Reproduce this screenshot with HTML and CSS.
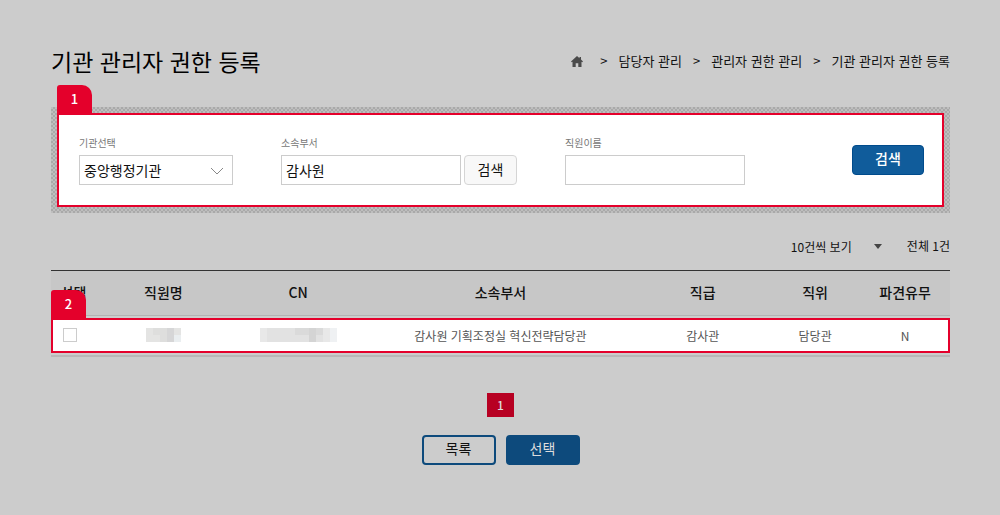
FILE: index.html
```
<!DOCTYPE html>
<html lang="ko">

<head>
    <meta charset="UTF-8">
    <meta name="viewport" content="width=device-width, initial-scale=1.0">
    <title>기관 관리자 권한 등록</title>
    <link rel="stylesheet" href="styles.css">
</head>

<body>
    <main class="page">
        <header class="page-header">
            <h1>기관 관리자 권한 등록</h1>
            <nav class="breadcrumb">
                <a href="#" class="home" aria-label="홈">
                    <svg width="12" height="11" viewBox="0 0 12 11">
                        <path d="M6 0 L8.500 2.200 V1 H10 V3.500 L12 5.500 L11.300 6.300 L10.500 5.700 V11 H7.300 V7.300 H4.700 V11 H1.500 V5.700 L0.700 6.300 L0 5.500 Z" fill="#4a4a4a" />
                    </svg>
                </a>
                <span>&gt;</span>
                <a href="#">담당자 관리</a>
                <span>&gt;</span>
                <a href="#">관리자 권한 관리</a>
                <span>&gt;</span>
                <a href="#">기관 관리자 권한 등록</a>
            </nav>
        </header>

        <div class="search-panel">
            <form class="search-box">
                <span class="badge">1</span>
                <div class="field">
                    <label for="org">기관선택</label>
                    <div class="select-wrap">
                        <select id="org">
                            <option>중앙행정기관</option>
                        </select>
                        <svg class="chevron" width="14" height="8" viewBox="0 0 14 8">
                            <path d="M1 1 L7 7 L13 1" fill="none" stroke="#888" />
                        </svg>
                    </div>
                </div>
                <div class="field">
                    <label for="dept">소속부서</label>
                    <div class="field-row">
                        <input type="text" id="dept" value="감사원">
                        <button type="button" class="btn-small">검색</button>
                    </div>
                </div>
                <div class="field">
                    <label for="name">직원이름</label>
                    <input type="text" id="name">
                </div>
                <button type="button" class="btn-search">검색</button>
            </form>
        </div>

        <div class="list-info">
            <div class="count-wrap">
                <select class="count-select" aria-label="보기 개수">
                    <option>10건씩 보기</option>
                </select>
                <svg class="caret" width="8" height="5" viewBox="0 0 8 5">
                    <path d="M0 0 H8 L4 5 Z" fill="#444" />
                </svg>
            </div>
            <span>전체 1건</span>
        </div>

        <table class="list">
            <colgroup>
                <col class="w5">
                <col class="w15">
                <col class="w15">
                <col class="w30">
                <col class="w15">
                <col class="w10">
                <col class="w10">
            </colgroup>
            <thead>
                <tr>
                    <th>선택</th>
                    <th>직원명</th>
                    <th>CN</th>
                    <th>소속부서</th>
                    <th>직급</th>
                    <th>직위</th>
                    <th>파견유무</th>
                </tr>
            </thead>
            <tbody>
                <tr>
                    <td class="check">
                        <div class="row-frame"><span class="badge">2</span></div>
                        <input type="checkbox" aria-label="선택">
                    </td>
                    <td>
                        <svg class="mosaic" width="35" height="14" viewBox="0 0 5 2" shape-rendering="crispEdges">
                            <path d="M0 0h5v2H0z" fill="#e4e4e3" />
                            <path d="M1 0h2v1H1z M2 1h1v1H2z" fill="#dededd" />
                            <path d="M3 0h1v2H3z" fill="#d6d6d7" />
                            <path d="M4 1h1v1H4z" fill="#eaeef0" />
                        </svg>
                    </td>
                    <td>
                        <svg class="mosaic" width="77" height="14" viewBox="0 0 11 2" shape-rendering="crispEdges">
                            <path d="M0 0h11v2H0z" fill="#e2e2e2" />
                            <path d="M0 0h1v2H0z M9 0h1v2H9z" fill="#e8e8e8" />
                            <path d="M10 0h1v2h-1z" fill="#eff1f3" />
                            <path d="M5 0h2v1H5z M8 0h1v1H8z" fill="#dadada" />
                            <path d="M7 0h1v2H7z" fill="#d4d4d4" />
                        </svg>
                    </td>
                    <td>감사원 기획조정실 혁신전략담당관</td>
                    <td>감사관</td>
                    <td>담당관</td>
                    <td>N</td>
                </tr>
            </tbody>
        </table>

        <div class="paging">
            <a href="#" class="current">1</a>
        </div>

        <div class="buttons">
            <button type="button" class="btn-line">목록</button>
            <button type="button" class="btn-fill">선택</button>
        </div>
    </main>
</body>

</html>
```
FILE: styles.css
```
* {
    margin: 0;
    padding: 0;
    box-sizing: border-box;
}

body {
    background: #ccc;
    color: #111;
    font-family: "Noto Sans CJK KR", sans-serif;
    font-size: 12px;
}

a {
    color: inherit;
    text-decoration: none;
}

input,
select,
button {
    font-family: inherit;
    font-size: 14px;
    color: #111;
}

select {
    appearance: none;
}

.page {
    padding: 43px 50px 50px 51px;
}

.page-header {
    display: flex;
    justify-content: space-between;
    align-items: center;
    height: 36px;
}

h1 {
    font-size: 23px;
    font-weight: 400;
    line-height: 36px;
    color: #000;
}

.breadcrumb {
    display: flex;
    align-items: center;
    gap: 11px;
    font-size: 13px;
    line-height: 20px;
}

.breadcrumb .home {
    display: flex;
    margin-right: 6px;
}

/* search */
.search-panel {
    margin-top: 28px;
    padding: 6px;
    background: repeating-conic-gradient(#a9a9a9 0 25%, #bebebe 0 50%) 0 0 / 4px 4px;
}

.search-box {
    position: relative;
    display: flex;
    align-items: center;
    gap: 48px;
    padding: 20px 18px 20px 20px;
    background: #fff;
    border: 2px solid #e4002b;
}

.badge {
    position: absolute;
    left: -2px;
    bottom: 100%;
    width: 35px;
    height: 30px;
    background: #e4002b;
    border-radius: 3px 10px 0 0;
    color: #fff;
    font-size: 13px;
    font-weight: 500;
    line-height: 28px;
    text-align: center;
}

.field label {
    display: block;
    margin-bottom: 4px;
    color: #777;
    font-size: 10px;
    line-height: 16px;
}

.field-row {
    display: flex;
    align-items: center;
    gap: 3px;
}

.field input,
.field select {
    display: block;
    width: 180px;
    height: 30px;
    padding: 0 4px;
    background: #fff;
    border: 1px solid #ccc;
}

.select-wrap {
    position: relative;
}

.field select {
    width: 154px;
}

.chevron {
    position: absolute;
    right: 9px;
    top: 12px;
    pointer-events: none;
}

.btn-small {
    width: 53px;
    height: 30px;
    padding-bottom: 2px;
    background: #f8f8f8;
    border: 1px solid #d5d5d5;
    border-radius: 4px;
}

.btn-search {
    width: 72px;
    height: 30px;
    margin-left: auto;
    padding-bottom: 4px;
    background: #105c9b;
    border: 1px solid #004b8c;
    border-radius: 4px;
    color: #fff;
    font-weight: 500;
}

/* list */
.list-info {
    display: flex;
    justify-content: flex-end;
    align-items: center;
    gap: 25px;
    margin-top: 23px;
    line-height: 20px;
}

.count-wrap {
    position: relative;
}

.count-select {
    display: block;
    width: 91px;
    height: 20px;
    background: none;
    border: none;
    font-size: 12px;
}

.caret {
    position: absolute;
    right: 0;
    top: 8px;
    pointer-events: none;
}

.list {
    width: 100%;
    margin-top: 14px;
    border-top: 1px solid #333;
    border-bottom: 2px solid #b8b8b8;
    border-spacing: 0;
    table-layout: fixed;
    text-align: center;
}

.w5 {
    width: 5%;
}

.w10 {
    width: 10%;
}

.w15 {
    width: 15%;
}

.w30 {
    width: 30%;
}

.list th {
    height: 45px;
    padding-bottom: 2px;
    background: #c7c7c7;
    border-bottom: 1px solid #b3b3b3;
    font-size: 14px;
    font-weight: 500;
}

.list tbody tr {
    position: relative;
    z-index: 1;
}

.list td {
    height: 39px;
    padding-bottom: 1px;
    color: #555;
}

.list .check {
    padding-right: 7px;
}

.check input {
    display: block;
    width: 14px;
    height: 14px;
    margin: 0 auto;
    appearance: none;
    background: #fff;
    border: 1px solid #ccc;
}

.row-frame {
    position: absolute;
    inset: 2px 0;
    z-index: -1;
    background: #fff;
    border: 2px solid #e4002b;
}

.mosaic {
    display: block;
    margin: 0 auto;
}

/* bottom */
.paging {
    display: flex;
    justify-content: center;
    margin-top: 36px;
}

.paging .current {
    width: 27px;
    background: #b70022;
    color: #ddd;
    font-weight: 500;
    line-height: 24px;
    text-align: center;
}

.buttons {
    display: flex;
    justify-content: center;
    gap: 10px;
    margin-top: 18px;
}

.buttons button {
    width: 74px;
    height: 30px;
    padding-bottom: 4px;
    border: 2px solid #0d4a7c;
    border-radius: 4px;
}

.buttons .btn-line {
    background: none;
}

.buttons .btn-fill {
    background: #0d4a7c;
    color: #ddd;
}
```
